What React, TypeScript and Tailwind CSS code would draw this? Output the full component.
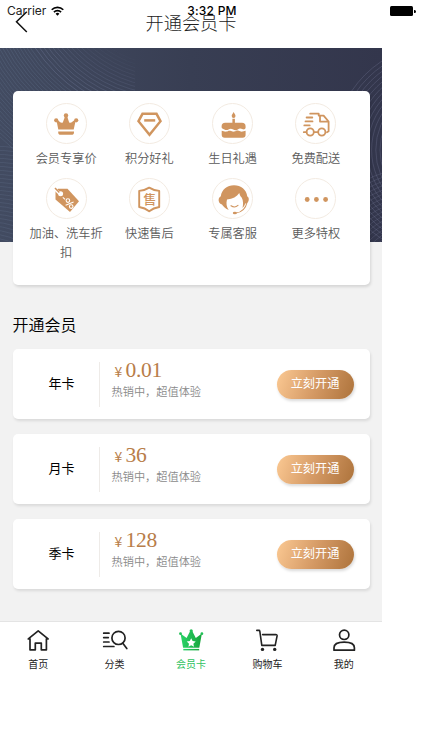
import type { ReactNode } from "react";

const GOLD = "#d0955f";

function CrownIcon() {
  return (
    <svg width="40" height="40" viewBox="0 0 40 40" fill={GOLD}>
      <circle cx="20" cy="11.5" r="2.2" />
      <circle cx="10.2" cy="16.3" r="2.1" />
      <circle cx="30.2" cy="16.3" r="2.1" />
      <path d="M19.2 12h1.8l2.2 6.4c1.4 1 3-.2 3.8-1.4l2.8-.9-2.1 9.4H12.3l-1.9-9.4 2.6.9c.8 1.2 2.4 2.4 3.8 1.4z" />
      <path d="M12.2 27.4h15.8v.8a2.6 2.6 0 0 1-2.6 2.6H14.8a2.6 2.6 0 0 1-2.6-2.6z" />
    </svg>
  );
}

function DiamondIcon() {
  return (
    <svg width="40" height="40" viewBox="0 0 40 40" fill="none" stroke={GOLD} strokeWidth="2.5">
      <path d="M13.5 9.8h14l4 7.4L20.5 30.8 9.5 17.2z" />
      <path d="M15.2 16.4h11" />
    </svg>
  );
}

function CakeIcon() {
  return (
    <svg width="40" height="40" viewBox="0 0 40 40" fill={GOLD}>
      <path d="M20.6 8c1 1.6 1.9 2.8 1.9 4a1.9 1.9 0 0 1-3.8 0c0-1.2 1-2.4 1.9-4z" />
      <path d="M19.4 14.8h2.5v4h7.1a3.6 3.6 0 0 1 3.6 3.6v1c0 1.5-1.4 2.3-2.8 1.9-2.2-.9-3.3-1-5 .1-1.9 1.2-3 1.1-4.6.1-1.7-1-3-1.1-4.7 0-1.6.9-2.7.7-4.1-.1-1.6-.5-2.8-.8-2.8-2.3v-.7a3.6 3.6 0 0 1 3.6-3.6h7.2z" />
      <path d="M8.7 26.7c1.8.2 2.5 1.1 4.4.9 1.7-.2 2.3-1.3 4.1-.8 1.7.5 2.3 1.1 4 .8 1.8-.3 2.7-1.4 4.4-.8 1.6.6 2.4 1.1 4 .7l3-.8v4a3 3 0 0 1-3 3H11.7a3 3 0 0 1-3-3z" />
    </svg>
  );
}

function TruckIcon() {
  return (
    <svg width="40" height="40" viewBox="0 0 40 40" fill="none" stroke={GOLD} strokeWidth="1.8" strokeLinecap="round" strokeLinejoin="round">
      <path d="M14.2 9.7h8.5v1.9h4.9l5 5.9v9.8l-1.6.9M24 12v5.6h8M10.6 13.5h5.7M9.5 17.4h7M8.3 21.4h5.4M7.8 28.2h2.6M18.2 28.2h3.6" />
      <circle cx="14.2" cy="28" r="3.6" />
      <circle cx="25.8" cy="28" r="3.6" />
    </svg>
  );
}

function TagIcon() {
  return (
    <svg width="40" height="40" viewBox="0 0 40 40">
      <path d="M12 9.7h9.5L33 22.3 24 33 9.5 20.5v-8z" fill={GOLD} />
      <circle cx="14.6" cy="14.8" r="2.5" fill="#fff" />
      <path d="M8.5 9.5l5 5" stroke="#fff" strokeWidth="3" />
      <path d="M9 9l4.3 4.6" stroke={GOLD} strokeWidth="1.5" />
      <g fill="none" stroke="#fff" strokeWidth="1.1">
        <path d="M16.8 18.4l2.3 1.9M19.6 26.2l8-3.2" />
        <circle cx="21.9" cy="21.6" r="1.8" />
        <circle cx="25.2" cy="27.6" r="1.8" />
      </g>
    </svg>
  );
}

function AfterSaleIcon() {
  return (
    <>
      <svg width="40" height="40" viewBox="0 0 40 40" fill="none" stroke={GOLD} strokeWidth="1.9" strokeLinejoin="round">
        <path d="M20.2 8.6c2.9 1.9 6.3 2.9 10 3.3v16.1c-3.8.6-7.2 2-10 4.2-2.8-2.2-6.2-3.6-10-4.2V11.9c3.7-.4 7.1-1.4 10-3.3z" />
      </svg>
      <span className="absolute inset-0 flex items-center justify-center pl-px text-[13px] font-medium leading-none text-[#d0955f]">售</span>
    </>
  );
}

function ServiceIcon() {
  return (
    <svg width="40" height="40" viewBox="0 0 40 40">
      <path
        d="M15.7 31C12 29.3 10 27 9 25.5 6.5 25 5.2 22.5 5.7 20c.4-1.5 1.3-2.3 2.1-2.7C8.8 10.5 14 6.3 21 6.3s12.5 4.5 13.3 11.2c1.3.6 1.7 2 1.4 3.7-.3 1.9-1.6 3.3-3.4 3.3-.6 1.8-1.5 3.3-2.8 4.5.9-3.5.8-7.5-.7-10.3C27.5 17.5 26.8 16 26.3 14c-2.5 3.7-6.5 6-12.3 6.5-1 3.5-.6 7.5 1.7 10.5z"
        fill={GOLD}
      />
      <g fill="none" stroke={GOLD} strokeWidth="1.1" strokeLinecap="round">
        <path d="M18 26.7c2.2 1.6 5 1.5 7-.3M34 23.5c-1.3 5.7-5.3 9.7-11 10.5" />
      </g>
      <ellipse cx="21.8" cy="34" rx="2" ry="1.3" fill={GOLD} />
    </svg>
  );
}

function MoreIcon() {
  return (
    <svg width="40" height="40" viewBox="0 0 40 40" fill={GOLD}>
      <circle cx="11.2" cy="20.5" r="2.4" />
      <circle cx="20.4" cy="20.5" r="2.4" />
      <circle cx="29.6" cy="20.5" r="2.4" />
    </svg>
  );
}

const benefits: { label: string; icon: ReactNode }[] = [
  { label: "会员专享价", icon: <CrownIcon /> },
  { label: "积分好礼", icon: <DiamondIcon /> },
  { label: "生日礼遇", icon: <CakeIcon /> },
  { label: "免费配送", icon: <TruckIcon /> },
  { label: "加油、洗车折扣", icon: <TagIcon /> },
  { label: "快速售后", icon: <AfterSaleIcon /> },
  { label: "专属客服", icon: <ServiceIcon /> },
  { label: "更多特权", icon: <MoreIcon /> },
];

const plans = [
  { name: "年卡", price: "0.01" },
  { name: "月卡", price: "36" },
  { name: "季卡", price: "128" },
];

const tabs: { label: string; active?: boolean; icon: ReactNode }[] = [
  {
    label: "首页",
    icon: (
      <svg width="26" height="24" viewBox="0 0 26 24" fill="none" stroke="#222" strokeWidth="1.7" strokeLinejoin="round" strokeLinecap="round">
        <path d="M5 10.9H3.3L13.2 2.8l9.9 8.1h-1.7v10.9h-5.1v-6.7h-6v6.7H5z" />
      </svg>
    ),
  },
  {
    label: "分类",
    icon: (
      <svg width="26" height="24" viewBox="0 0 26 24" fill="none" stroke="#222" strokeWidth="1.7" strokeLinecap="round">
        <path d="M1.7 5.2h5.3M1.7 9.6h4.6M1.7 14h5.3M1.7 18.5h10.2M20.8 15.2l4 5.3" />
        <circle cx="16.5" cy="9.9" r="6.6" />
      </svg>
    ),
  },
  {
    label: "会员卡",
    active: true,
    icon: (
      <svg width="26" height="24" viewBox="0 0 26 24">
        <defs>
          <linearGradient id="crown" x1="0" x2="1">
            <stop offset="0" stopColor="#28d468" />
            <stop offset="1" stopColor="#18a43c" />
          </linearGradient>
        </defs>
        <g fill="url(#crown)">
          <path d="M2.5 5.5l6.1 4.6L12.2 3h2l3.6 7.1 6.1-4.6-2.6 14.3H5.1z" />
          <path d="M5.3 20.9h15.9v1.5H5.3z" />
        </g>
        <g fill="#20c055">
          <circle cx="13.2" cy="2.8" r="1.6" />
          <circle cx="2.5" cy="5.7" r="1.4" />
          <circle cx="23.9" cy="5.7" r="1.4" />
        </g>
        <path d="M13.2 10.3l1.4 2.8 3.1.4-2.3 2.2.6 3.1-2.8-1.5-2.8 1.5.6-3.1-2.3-2.2 3.1-.4z" fill="#fff" />
      </svg>
    ),
  },
  {
    label: "购物车",
    icon: (
      <svg width="26" height="24" viewBox="0 0 26 24" fill="none" stroke="#222" strokeWidth="1.6" strokeLinecap="round" strokeLinejoin="round">
        <path d="M2.8 2.4h2.2c.5 0 .7.3.8.8l2 14.2h13.3M8.6 6.6h13.2c1 0 1.4.5 1.3 1.3L21.2 17.4" />
        <circle cx="8.5" cy="21.4" r="1.7" fill="#222" stroke="none" />
        <circle cx="20.7" cy="21.4" r="1.7" fill="#222" stroke="none" />
      </svg>
    ),
  },
  {
    label: "我的",
    icon: (
      <svg width="26" height="24" viewBox="0 0 26 24" fill="none" stroke="#222" strokeWidth="1.7" strokeLinejoin="round">
        <circle cx="13.2" cy="6.8" r="4.7" />
        <path d="M3 22.2v-2.4c0-4 5-5.6 10.2-5.6s10.2 1.6 10.2 5.6v2.4z" />
      </svg>
    ),
  },
];

// concentric hairlines of the banner
const topRings = Array.from({ length: 16 }, (_, i) => 108 + i * 3.6);
const outerRings = Array.from({ length: 28 }, (_, i) => 166 + i * 3);
const lowerRings = Array.from({ length: 24 }, (_, i) => 40 + i * 4);
const rightRings = Array.from({ length: 12 }, (_, i) => 60 + i * 4.2);

function BannerLines() {
  return (
    <div className="absolute inset-0 flex justify-between">
      <svg width="135" height="194" viewBox="0 0 135 194" fill="none" strokeWidth="0.8">
        {topRings.map((r) => (
          <circle key={r} cx="170" cy="-90" r={r} stroke="#8f9cc0" strokeOpacity={(r - 100) / 200} />
        ))}
        {outerRings.map((r) => (
          <circle key={r} cx="170" cy="-90" r={r} stroke="#8297b4" strokeOpacity="0.22" />
        ))}
        {lowerRings.map((r) => (
          <ellipse key={r} cx="-10" cy="230" rx={r * 1.2} ry={r} stroke="#7f93b0" strokeOpacity="0.2" />
        ))}
      </svg>
      <svg width="60" height="194" viewBox="322 0 60 194" fill="none" strokeWidth="0.8">
        {rightRings.map((r) => (
          <circle key={r} cx="440" cy="102" r={r} stroke="#8b8fae" strokeOpacity="0.3" />
        ))}
        {lowerRings.map((r) => (
          <circle key={r} cx="425" cy="250" r={r} stroke="#8b8fae" strokeOpacity="0.25" />
        ))}
      </svg>
    </div>
  );
}

function StatusBar() {
  return (
    <div className="absolute inset-x-0 top-0 grid h-[22px] grid-cols-3 items-center pl-[7px] pr-[6px] font-[Inter,sans-serif] text-[12px] leading-none text-black">
      <div className="flex items-center gap-[5px]">
        <span className="font-normal text-[#222]">Carrier</span>
        <svg width="13" height="10" viewBox="0 0 13 10" fill="none" stroke="#000" strokeWidth="1.6">
          <path d="M.7 3.8a8.2 8.2 0 0 1 11.6 0M2.9 6.1a5.1 5.1 0 0 1 7.2 0" />
          <path d="M6.5 9.8L4.6 7.8a2.7 2.7 0 0 1 3.8 0z" fill="#000" stroke="none" />
        </svg>
      </div>
      <span className="whitespace-nowrap pl-px text-center font-medium tracking-[0.25px]">3:32 PM</span>
      <div className="flex items-center justify-end gap-px">
        <span className="h-[10px] w-[23px] rounded-[1.5px] bg-black" />
        <span className="h-[3px] w-[1.5px] rounded-r bg-black" />
      </div>
    </div>
  );
}

export default function App() {
  return (
    <div className="relative h-[750px] w-[422px] overflow-hidden bg-white font-['Noto_Sans_CJK_SC',sans-serif] font-[350]">
      <div className="w-[382px]">
        <header className="grid h-12 grid-cols-[1fr_auto_1fr] items-center text-[18.2px] leading-none text-[#222]">
          <svg className="-mt-[4px] ml-[15px]" width="14" height="24" viewBox="0 0 14 24" fill="none" stroke="#111" strokeWidth="1.5">
            <path d="M11.8 1.8L1.5 11.8 11.8 22" />
          </svg>
          <h1 className="-mt-[3px] font-light">开通会员卡</h1>
        </header>

        <main className="h-[573px] bg-[#f2f2f2]">
          <section className="relative h-[194px] bg-linear-to-r from-[#424b61] via-[#383e53] to-[#33364c] px-[12.5px] pt-[43px]">
            <BannerLines />
            <div className="relative grid h-[194px] grid-cols-4 content-start rounded-[5px] bg-white px-3 pt-3 shadow-[1px_2px_3px_rgba(0,0,0,0.12)]">
              {benefits.map((b) => (
                <div key={b.label} className="flex h-[75px] flex-col items-center">
                  <div className="relative size-[41px] rounded-full border border-[#f3ebe2] [&>svg]:-ml-[0.5px] [&>svg]:-mt-[0.5px]">{b.icon}</div>
                  <p className="mt-[5px] w-[75px] text-center text-[12.2px] leading-[18.5px] text-[#5a5a5a]">{b.label}</p>
                </div>
              ))}
            </div>
          </section>

          <h2 className="mt-[72px] px-[12.5px] text-[16px] leading-5 text-black">开通会员</h2>

          <div className="mt-[15px] flex flex-col gap-[15px] px-[12.5px]">
            {plans.map((p) => (
              <div key={p.name} className="flex h-[70px] items-center rounded-[5px] bg-white pr-4 shadow-[1px_2px_3px_rgba(0,0,0,0.1)]">
                <div className="w-[86px] pb-[4px] pl-[12px] text-center text-[13px] font-normal leading-none text-black">{p.name}</div>
                <div className="h-[45px] w-px bg-[#eeebe8]" />
                <div className="flex-1 pb-[10px] pl-3">
                  <div className="flex h-[24px] items-baseline text-[#b87d49]">
                    <span className="w-[14px] text-center text-[14px] font-normal leading-6">¥</span>
                    <span className="font-['Liberation_Serif',serif] text-[21.5px] font-normal leading-6 tracking-[-0.3px]">{p.price}</span>
                  </div>
                  <p className="text-[11.2px] leading-[18px] text-[#8a8a8a]">热销中，超值体验</p>
                </div>
                <button className="h-[29px] w-[77px] rounded-full bg-linear-110 from-[#fbc993] via-[#d59a65] to-[#ad733b] pb-px text-[12.2px] font-normal leading-none text-white shadow-[1px_2px_3px_rgba(0,0,0,0.15)]">
                  立刻开通
                </button>
              </div>
            ))}
          </div>
        </main>

        <nav className="grid h-[61px] grid-cols-5 border-t border-[#e4e4e4] bg-white pt-[6px]">
          {tabs.map((t) => (
            <div
              key={t.label}
              className={`flex flex-col items-center text-[10px] font-normal leading-none ${t.active ? "text-[#2fc25f]" : "text-[#222]"}`}
            >
              {t.icon}
              <span className="mt-[7px]">{t.label}</span>
            </div>
          ))}
        </nav>
      </div>
      <StatusBar />
    </div>
  );
}
